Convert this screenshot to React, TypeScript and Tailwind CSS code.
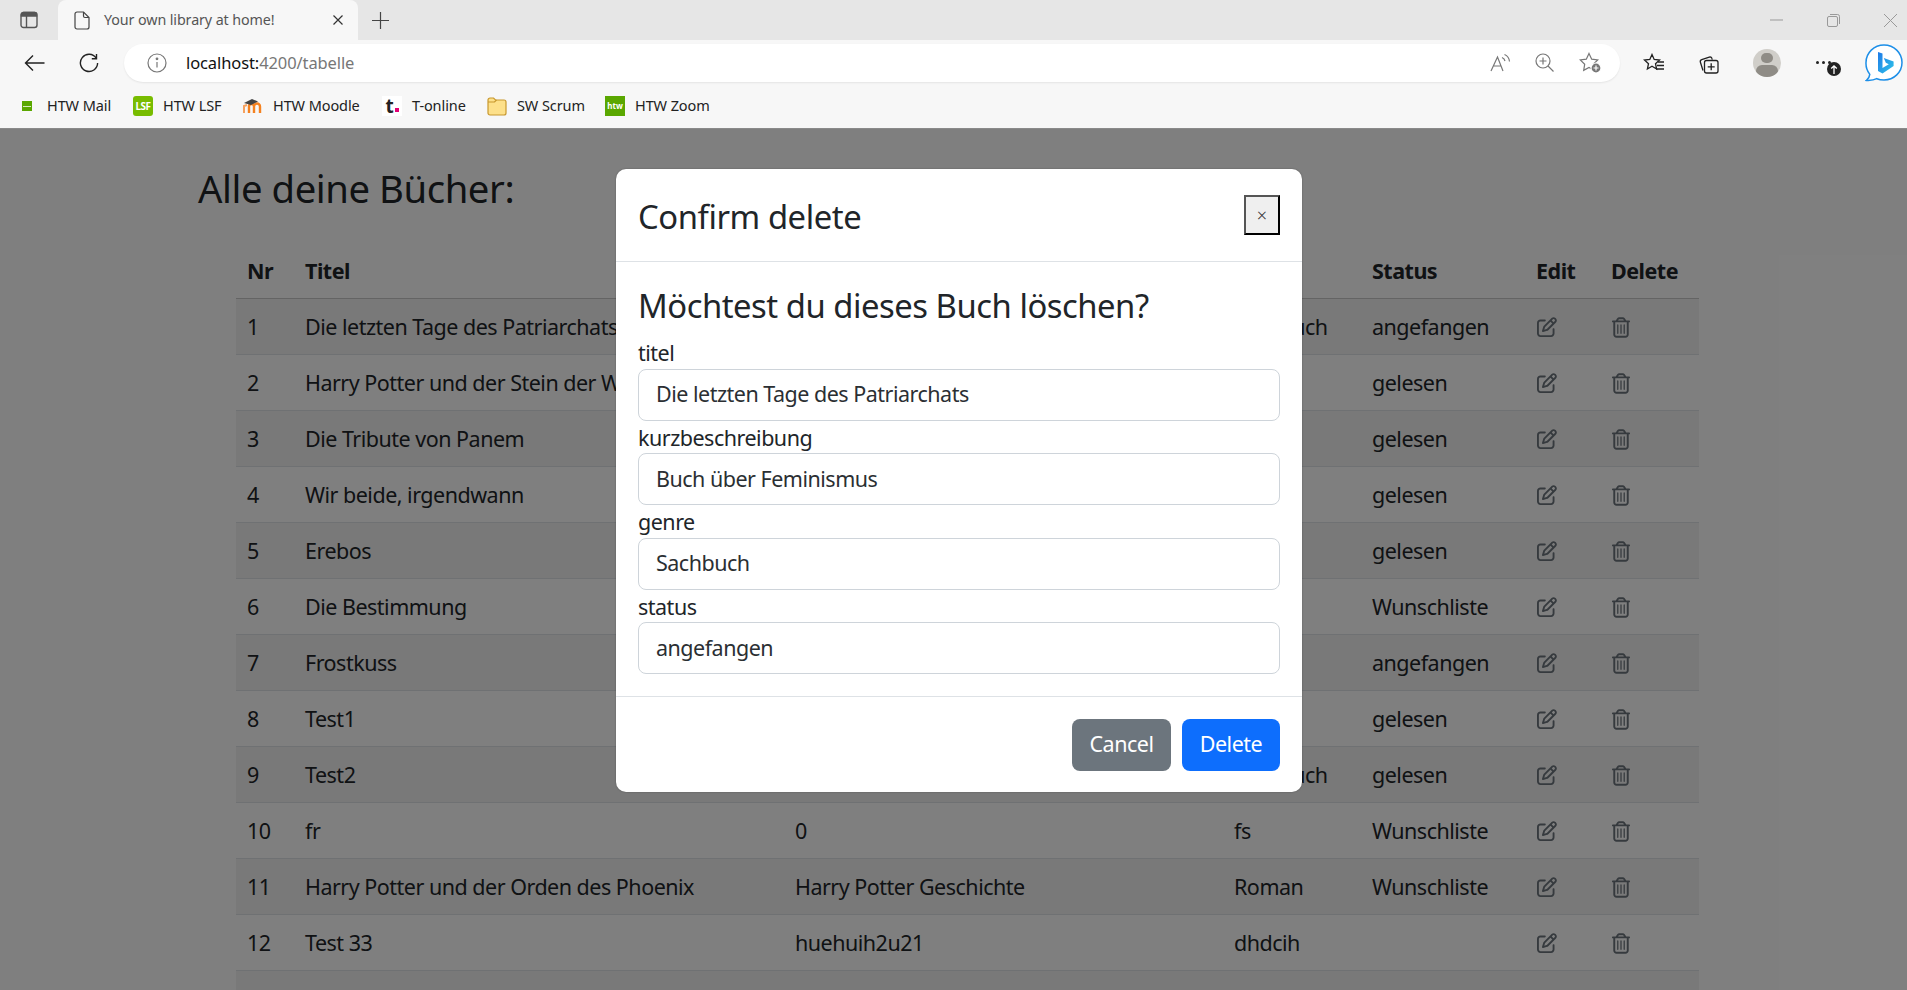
import { ReactNode } from 'react';
import { FaRegPenToSquare, FaRegTrashCan } from 'react-icons/fa6';

interface Book {
  nr: number;
  titel: string;
  kurz: string;
  genre: string;
  status: string;
}

const books: Book[] = [
  { nr: 1, titel: 'Die letzten Tage des Patriarchats', kurz: 'Buch über Feminismus', genre: 'Sachbuch', status: 'angefangen' },
  { nr: 2, titel: 'Harry Potter und der Stein der Weisen', kurz: '', genre: '', status: 'gelesen' },
  { nr: 3, titel: 'Die Tribute von Panem', kurz: '', genre: '', status: 'gelesen' },
  { nr: 4, titel: 'Wir beide, irgendwann', kurz: '', genre: '', status: 'gelesen' },
  { nr: 5, titel: 'Erebos', kurz: '', genre: '', status: 'gelesen' },
  { nr: 6, titel: 'Die Bestimmung', kurz: '', genre: '', status: 'Wunschliste' },
  { nr: 7, titel: 'Frostkuss', kurz: '', genre: '', status: 'angefangen' },
  { nr: 8, titel: 'Test1', kurz: '', genre: '', status: 'gelesen' },
  { nr: 9, titel: 'Test2', kurz: '', genre: 'Sachbuch', status: 'gelesen' },
  { nr: 10, titel: 'fr', kurz: '0', genre: 'fs', status: 'Wunschliste' },
  { nr: 11, titel: 'Harry Potter und der Orden des Phoenix', kurz: 'Harry Potter Geschichte', genre: 'Roman', status: 'Wunschliste' },
  { nr: 12, titel: 'Test 33', kurz: 'huehuih2u21', genre: 'dhdcih', status: '' }
];

const fields = [
  { label: 'titel', value: 'Die letzten Tage des Patriarchats' },
  { label: 'kurzbeschreibung', value: 'Buch über Feminismus' },
  { label: 'genre', value: 'Sachbuch' },
  { label: 'status', value: 'angefangen' }
];

function Bookmark({ width, icon, label }: { width: string; icon: ReactNode; label: string }) {
  return (
    <div className={`flex items-center gap-[10px] ${width}`}>
      <span className="flex h-5 w-5 shrink-0 items-center justify-center">{icon}</span>
      <span className="whitespace-nowrap text-[14.5px] tracking-[-0.1px] text-[#222]">{label}</span>
    </div>
  );
}

function TabStrip() {
  return (
    <div className="flex h-10 items-end bg-[#e6e6e6]">
      <div className="flex h-10 w-[58px] items-center justify-center pl-0">
        <svg width="18" height="18" viewBox="0 0 18 18" fill="none" stroke="#555" strokeWidth="1.4">
          <rect x="1" y="1.5" width="16" height="15" rx="2.5" />
          <path d="M1.5 3.5a2 2 0 0 1 2-2h11a2 2 0 0 1 2 2V5h-15z" fill="#555" />
          <path d="M6.5 5v11" />
        </svg>
      </div>
      <div className="flex h-10 w-[300px] items-center rounded-t-[8px] bg-[#f7f7f7] pl-4 pr-[15px]">
        <svg width="16" height="19" viewBox="0 0 16 19" fill="none" stroke="#444" strokeWidth="1.2">
          <path d="M3 1h6.5L15 6.5V16a2 2 0 0 1-2 2H3a2 2 0 0 1-2-2V3a2 2 0 0 1 2-2z" />
          <path d="M9.5 1v4a1.5 1.5 0 0 0 1.5 1.5h4" />
        </svg>
        <span className="ml-[14px] flex-1 whitespace-nowrap text-[14.3px] tracking-[-0.1px] text-[#555]">
          Your own library at home!
        </span>
        <svg width="10" height="10" viewBox="0 0 10 10" stroke="#333" strokeWidth="1.2">
          <path d="M.5.5l9 9M9.5.5l-9 9" />
        </svg>
      </div>
      <div className="flex h-10 w-11 items-center justify-center">
        <svg width="17" height="17" viewBox="0 0 17 17" stroke="#444" strokeWidth="1.2">
          <path d="M8.5 0v17M0 8.5h17" />
        </svg>
      </div>
      <div className="flex-1" />
      <div className="flex h-10 items-center gap-[43px] pr-[10px]">
        <span className="flex w-[14px] justify-center">
          <svg width="13" height="2" viewBox="0 0 13 2" stroke="#999">
            <path d="M0 1h13" />
          </svg>
        </span>
        <span className="flex w-[14px] justify-center">
          <svg width="13" height="13" viewBox="0 0 13 13" fill="none" stroke="#999">
            <rect x=".5" y="2.5" width="10" height="10" rx="1.5" />
            <path d="M3 .5h7.5a2 2 0 0 1 2 2V10" />
          </svg>
        </span>
        <span className="flex w-[14px] justify-center">
          <svg width="13" height="13" viewBox="0 0 13 13" stroke="#999">
            <path d="M0 0l13 13M13 0L0 13" />
          </svg>
        </span>
      </div>
    </div>
  );
}

function AddressBar() {
  return (
    <div className="flex h-[46px] items-center bg-[#f7f7f7]">
      <span className="flex w-[68px] justify-center">
        <svg width="21" height="18" viewBox="0 0 21 18" fill="none" stroke="#222" strokeWidth="1.4">
          <path d="M20.5 9H1.5M9 1.5L1.5 9 9 16.5" />
        </svg>
      </span>
      <span className="flex w-[42px] justify-center">
        <svg width="20" height="20" viewBox="0 0 20 20" fill="none" stroke="#222" strokeWidth="1.4">
          <path d="M17.2 5.2A8.6 8.6 0 1 0 18.6 10" />
          <path d="M17.5 1v4.7h-4.7" />
        </svg>
      </span>
      <div className="ml-[14px] flex h-[38px] w-[1496px] items-center rounded-full bg-white pl-[23px] shadow-[0_1px_2px_rgba(0,0,0,0.08)]">
        <svg width="20" height="20" viewBox="0 0 20 20" fill="none" stroke="#777" strokeWidth="1.2">
          <circle cx="10" cy="10" r="9" />
          <path d="M10 9v5.5" />
          <circle cx="10" cy="5.8" r=".8" fill="#777" />
        </svg>
        <span className="ml-[19px] flex-1 text-[16.5px] tracking-[-0.1px]">
          <span className="text-[#111]">localhost:</span>
          <span className="text-[#777]">4200/tabelle</span>
        </span>
        <div className="flex items-center gap-[23px] pr-[18px]">
          <svg width="22" height="20" viewBox="0 0 22 20" fill="none" stroke="#777" strokeWidth="1.2">
            <path d="M1 18L7.5 4 13 18M3.5 13h8" />
            <path d="M12 4.5a5 5 0 0 1 3 3.5M14.5 1.5a8.5 8.5 0 0 1 5 7" />
          </svg>
          <svg width="19" height="20" viewBox="0 0 19 20" fill="none" stroke="#777" strokeWidth="1.2">
            <circle cx="8" cy="8" r="7" />
            <path d="M13 13l5.5 5.5M8 4.5v7M4.5 8h7" />
          </svg>
          <svg className="ml-[2px]" width="23" height="22" viewBox="0 0 23 22" fill="none" stroke="#777" strokeWidth="1.2">
            <path d="M10 1.5l2.7 5.7 6 .8-4.4 4.2 1 6.2L10 15.5l-5.3 2.9 1-6.2L1.3 8l6-.8z" />
            <circle cx="17" cy="16" r="5" fill="#777" stroke="#fff" />
            <path d="M17 13.5v5M14.5 16h5" stroke="#fff" />
          </svg>
        </div>
      </div>
      <span className="ml-[21px] flex w-[26px] justify-center">
        <svg width="22" height="20" viewBox="0 0 22 20" fill="none" stroke="#222" strokeWidth="1.3">
          <path d="M9 1.5l2.2 5 5.3.6-4 3.6 1.1 5.3L9 13.3 4.4 16l1.1-5.3-4-3.6 5.3-.6z" />
          <path d="M15 9h6M14 12.5h7M13 16h8" />
        </svg>
      </span>
      <span className="ml-[28px] flex w-[26px] justify-center">
        <svg width="21" height="21" viewBox="0 0 21 21" fill="none" stroke="#222" strokeWidth="1.3">
          <path d="M5 17.5L2.4 9.2a2 2 0 0 1 1.3-2.5l7.6-2.6a2 2 0 0 1 2.6 1.3l.4 1.2" />
          <rect x="6.5" y="7.5" width="13.5" height="12.5" rx="2" fill="#f7f7f7" />
          <path d="M13.2 10.3v7M9.7 13.8h7" />
        </svg>
      </span>
      <span className="ml-[32px] flex h-7 w-7 flex-col items-center overflow-hidden rounded-full bg-[#d0cec9]">
        <span className="mt-[4px] h-[12px] w-[12px] rounded-full bg-[#8f8c86]" />
        <span className="mt-[2px] h-[14px] w-[22px] rounded-full bg-[#8f8c86]" />
      </span>
      <span className="relative ml-[28px] flex h-8 w-[28px] items-center justify-center">
        <span className="flex -translate-y-[1px] gap-[3px]">
          <span className="h-[3px] w-[3px] rounded-full bg-[#222]" />
          <span className="h-[3px] w-[3px] rounded-full bg-[#222]" />
          <span className="h-[3px] w-[3px] rounded-full bg-[#222]" />
        </span>
        <span className="absolute left-[18px] top-[15px] flex h-[14px] w-[14px] items-center justify-center rounded-full bg-[#222]">
          <svg width="8" height="9" viewBox="0 0 8 9" fill="none" stroke="#fff" strokeWidth="1.3">
            <path d="M4 9V1M1.2 3.6L4 1l2.8 2.6" />
          </svg>
        </span>
      </span>
      <span className="ml-[27px] flex w-[40px] justify-center">
        <svg width="38" height="38" viewBox="0 0 38 38">
          <defs>
            <linearGradient id="bingB" x1="0" y1="0" x2="1" y2="1">
              <stop offset="0" stopColor="#1f7ae8" />
              <stop offset="1" stopColor="#2fc4e8" />
            </linearGradient>
          </defs>
          <path
            d="M19 1a18 17.5 0 0 1 0 35c-2.500 0-5-.4-7.200-1.300-2.800 1.500-6 1.900-10.300 1.700 1.800-1.400 3-3.300 3.300-6A17.500 17.500 0 0 1 1 18.500 18 17.500 0 0 1 19 1z"
            fill="#fff"
            stroke="#1d8fe8"
            strokeWidth="1.5"
          />
          <path
            d="M13 8l4.500 1.600v14.300l6.300-3.700-3-1.400-2-4.800 9.800 3.400v4.700L17.500 29.500 13 27z"
            fill="url(#bingB)"
          />
        </svg>
      </span>
    </div>
  );
}

function BookmarksBar() {
  return (
    <div className="flex h-[43px] items-center border-b border-b-[#8a8a8a] bg-[#f7f7f7] pb-[2px] pl-[17px]">
      <Bookmark
        width="w-[116px]"
        label="HTW Mail"
        icon={
          <span className="flex h-[10px] w-[10px] flex-col justify-center bg-[#5aa700]">
            <span className="mx-[1px] h-[1px] bg-[#d7ecc0]" />
          </span>
        }
      />
      <Bookmark
        width="w-[110px]"
        label="HTW LSF"
        icon={
          <span className="flex h-5 w-5 items-center justify-center rounded-[3px] bg-[#78bc00] text-[10px] font-bold leading-none tracking-[-0.5px] text-white">
            LSF
          </span>
        }
      />
      <Bookmark
        width="w-[139px]"
        label="HTW Moodle"
        icon={
          <svg width="20" height="16" viewBox="0 0 20 16" fill="none">
            <path d="M1 15V8l3-1" stroke="#f6a15e" strokeWidth="2" />
            <path d="M6 15V8.500a2.500 2.500 0 0 1 5 0V15M11 8.500a2.700 2.700 0 0 1 6 0V15" stroke="#f58220" strokeWidth="2.400" />
            <path d="M1 5l8-4 6 2.500-7 3.500z" fill="#444" />
          </svg>
        }
      />
      <Bookmark
        width="w-[105px]"
        label="T-online"
        icon={
          <span className="flex h-5 w-5 items-end justify-center bg-white text-[19px] font-bold leading-[20px] text-[#222]">
            t<span className="mb-[4px] ml-[1px] h-1 w-1 bg-[#e20074]" />
          </span>
        }
      />
      <Bookmark
        width="w-[118px]"
        label="SW Scrum"
        icon={
          <svg width="20" height="19" viewBox="0 0 20 19">
            <path d="M1 3a2 2 0 0 1 2-2h3.500l2 2H17a2 2 0 0 1 2 2v11a2 2 0 0 1-2 2H3a2 2 0 0 1-2-2z" fill="#fde08a" stroke="#c8982e" strokeWidth="1.200" />
            <path d="M1 5h6.500l2-2" fill="none" stroke="#c8982e" strokeWidth="1.200" />
          </svg>
        }
      />
      <Bookmark
        width="w-[140px]"
        label="HTW Zoom"
        icon={
          <span className="flex h-5 w-5 items-center justify-center overflow-hidden bg-[#5aa700] text-[8px] font-bold leading-none text-white">
            htw
          </span>
        }
      />
    </div>
  );
}

function BooksTable() {
  const cell = 'px-[11px] pt-[2px] align-middle whitespace-nowrap';
  const head = `${cell} font-bold`;
  return (
    <table className="ml-[236px] mt-[27px] w-[1463px] table-fixed border-collapse text-[21.5px] tracking-[-0.5px] text-[#212529]">
      <colgroup>
        <col className="w-[58px]" />
        <col className="w-[490px]" />
        <col className="w-[439px]" />
        <col className="w-[138px]" />
        <col className="w-[164px]" />
        <col className="w-[75px]" />
        <col className="w-[99px]" />
      </colgroup>
      <thead>
        <tr className="h-[56px] border-b border-b-[#c8c8c8] text-left">
          <th className={head}>Nr</th>
          <th className={head}>Titel</th>
          <th className={head}>Kurzbeschreibung</th>
          <th className={head}>Genre</th>
          <th className={head}>Status</th>
          <th className={head}>Edit</th>
          <th className={head}>Delete</th>
        </tr>
      </thead>
      <tbody>
        {books.map((book, index) => (
          <tr
            key={book.nr}
            className={`h-[56px] border-b border-b-[#dee2e6] ${index % 2 === 0 ? 'bg-[#f2f2f2]' : 'bg-white'}`}
          >
            <td className={cell}>{book.nr}</td>
            <td className={cell}>{book.titel}</td>
            <td className={cell}>{book.kurz}</td>
            <td className={cell}>{book.genre}</td>
            <td className={cell}>{book.status}</td>
            <td className={cell}>
              <FaRegPenToSquare className="ml-[1px] h-[20px] w-[20px] text-[#6c757d]" />
            </td>
            <td className={cell}>
              <FaRegTrashCan className="ml-[1px] h-[21px] w-[18px] text-[#6c757d]" />
            </td>
          </tr>
        ))}
        <tr className="h-[56px] bg-[#f2f2f2]">
          <td colSpan={7} />
        </tr>
      </tbody>
    </table>
  );
}

function DeleteModal() {
  return (
    <div className="absolute left-[616px] top-[40px] w-[686px] rounded-[10px] bg-white text-[#212529] shadow-[0_0_2px_rgba(0,0,0,0.3)]">
      <div className="flex h-[93px] items-center justify-between border-b border-b-[#dee2e6] px-[22px]">
        <h5 className="pt-[3px] text-[32.8px] font-[450] tracking-[-0.43px]">Confirm delete</h5>
        <button
          type="button"
          className="flex h-10 w-[36px] items-center justify-center border-2 border-[#555] border-b-black border-r-black bg-[#efefef] text-[18px] font-light leading-none text-[#333]"
        >
          ×
        </button>
      </div>
      <div className="px-[22px] pb-[22px] pt-[24px]">
        <h4 className="mb-[10px] text-[32.8px] font-[450] leading-[40px] tracking-[-0.47px]">
          Möchtest du dieses Buch löschen?
        </h4>
        {fields.map(field => (
          <div key={field.label}>
            <label className="block h-[32.5px] text-[21.5px] leading-[33px] tracking-[-0.5px]">{field.label}</label>
            <div className="flex h-[52px] items-center rounded-[8px] border border-[#ced4da] bg-white px-[17px] text-[21.5px] tracking-[-0.5px] text-[#2b2f33]">
              {field.value}
            </div>
          </div>
        ))}
      </div>
      <div className="flex h-[96px] items-center justify-end gap-[11px] border-t border-t-[#dee2e6] px-[22px]">
        <button type="button" className="h-[52px] w-[99px] rounded-[8px] bg-[#6c757d] text-[21.5px] tracking-[-0.5px] text-white">
          Cancel
        </button>
        <button type="button" className="h-[52px] w-[98px] rounded-[8px] bg-[#0d6efd] text-[21.5px] tracking-[-0.5px] text-white">
          Delete
        </button>
      </div>
    </div>
  );
}

export default function App() {
  return (
    <div className="h-[990px] overflow-hidden font-['Noto_Sans',sans-serif]">
      <TabStrip />
      <AddressBar />
      <BookmarksBar />
      <main className="relative h-[861px] overflow-hidden bg-white">
        <h1 className="pl-[198px] pt-[32px] text-[38.25px] font-[450] leading-[54px] tracking-[-0.43px] text-[#212529]">
          Alle deine Bücher:
        </h1>
        <BooksTable />
        <div className="absolute inset-0 bg-black/50" />
        <DeleteModal />
      </main>
    </div>
  );
}
